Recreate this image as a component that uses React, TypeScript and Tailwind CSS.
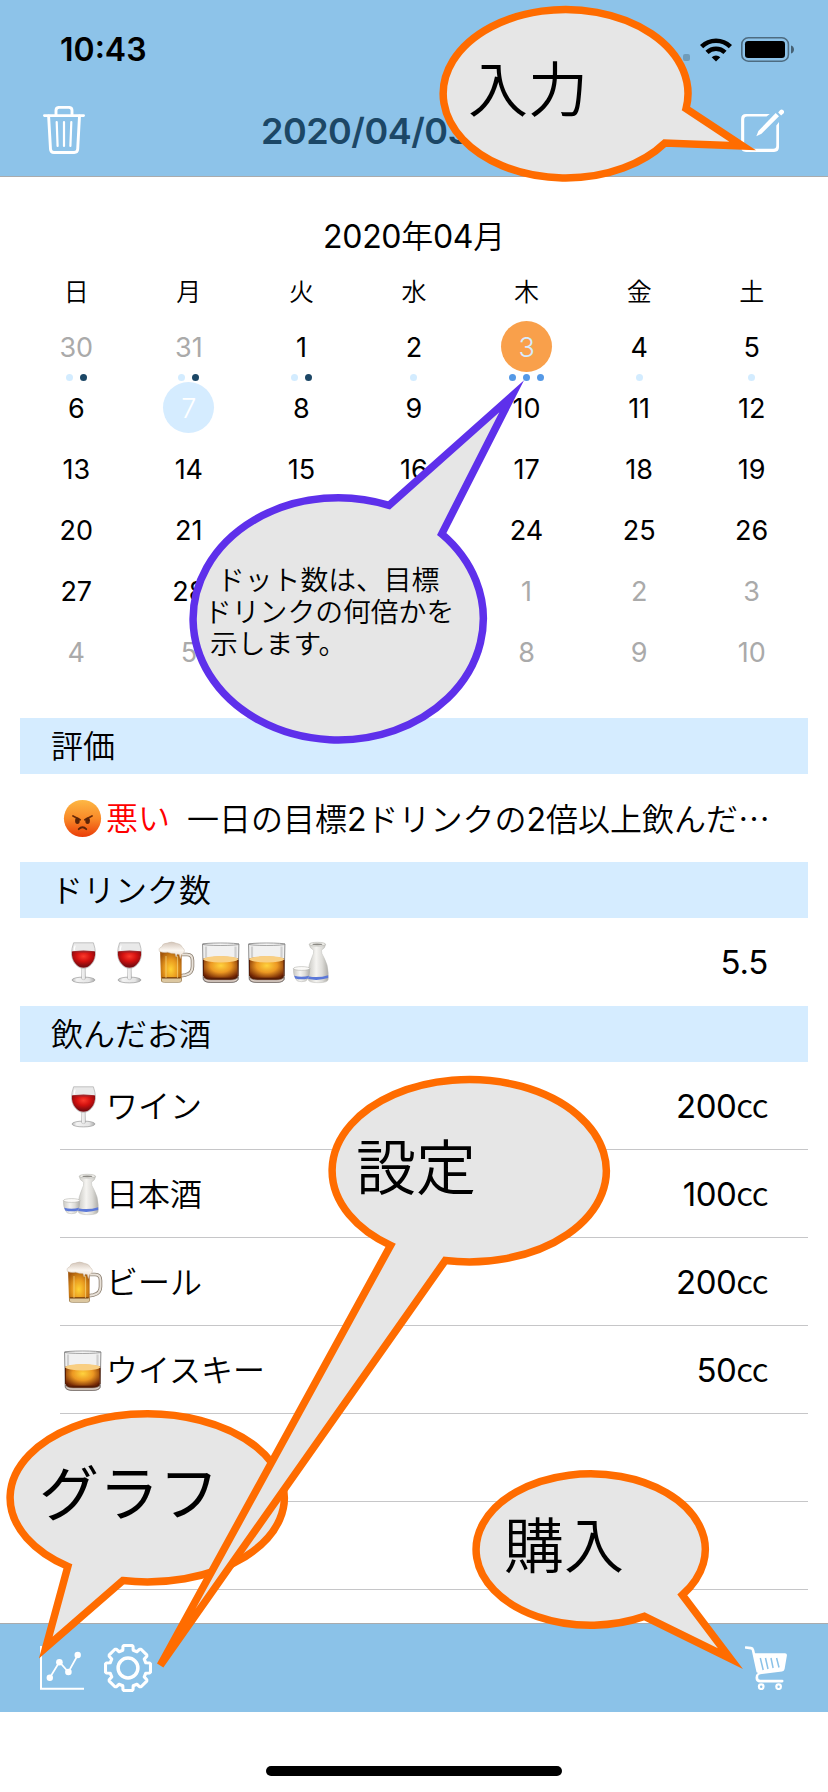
import React from "react";

/* ---------- status bar ---------- */

const WifiIcon = () => (
  <svg className="h-6 w-8" viewBox="0 0 32 24" fill="none">
    <path d="M1.6 8.6a20.6 20.6 0 0 1 28.8 0" stroke="#000" strokeWidth="4.6" />
    <path d="M7 14.4a12.8 12.8 0 0 1 18 0" stroke="#000" strokeWidth="4.4" />
    <path d="M16 23.6l-4.3-4.4a6.3 6.3 0 0 1 8.6 0z" fill="#000" />
  </svg>
);

const BatteryIcon = () => (
  <svg className="h-[25px] w-[54px]" viewBox="0 0 54 25" fill="none">
    <rect x="0.8" y="0.8" width="46.6" height="23.4" rx="6.5" stroke="#000" strokeOpacity="0.45" strokeWidth="1.6" />
    <rect x="4" y="4" width="40" height="17" rx="3.2" fill="#000" />
    <path d="M50 8.5c4 1 4 7 0 8z" fill="#000" fillOpacity="0.5" />
  </svg>
);

/* ---------- toolbar icons ---------- */

const TrashIcon = () => (
  <svg className="h-12 w-[42px]" viewBox="0 0 42 48" fill="none" stroke="#fff" strokeLinecap="round" strokeLinejoin="round">
    <path d="M1.4 9.6H40.6" strokeWidth="2.8" />
    <path d="M13 9V4.6q0-3.2 3.2-3.2h9.6q3.2 0 3.2 3.2V9" strokeWidth="2.9" />
    <path d="M5.6 10l1.9 33.2q.2 3.3 3.5 3.3h20.2q3.3 0 3.5-3.3L36.500 10" strokeWidth="2.9" />
    <path d="M13.7 16l.9 24M21 16v24M28.3 16l-.9 24" strokeWidth="2.2" />
  </svg>
);

const ComposeIcon = () => (
  <svg className="h-[43px] w-[43px]" viewBox="0 0 43 43" fill="none">
    <path d="M28.8 5L25.5 7.6H6.2q-3 0-3 3v26.2q0 3 3 3h26.100q3 0 3-3V16.500l2.700-3.500v25q0 4.900-4.900 4.900H5q-4.900 0-4.900-4.900V10Q.1 5 5 5z" fill="#fff" />
    <path d="M15.300 27.200l2.100-5.200L34.700 4l3.300 3.300L20.500 24.800z" fill="#fff" />
    <path d="M37.200 3.500l1.800-2.200a2.300 2.300 0 0 1 3.400 3.100l-2.300 2z" fill="#fff" />
  </svg>
);

const ChartIcon = () => (
  <svg className="h-11 w-11" viewBox="0 0 44 44" fill="none">
    <path d="M1 0V42.800H44" stroke="#fff" strokeWidth="2" />
    <path d="M9.800 31.800L19.400 16l9 10L37.800 9" stroke="#fff" strokeWidth="1.700" />
    <g fill="#fff">
      <circle cx="9.800" cy="31.800" r="3.200" />
      <circle cx="19.400" cy="16.300" r="3.300" />
      <circle cx="28.400" cy="26" r="3.300" />
      <circle cx="37.700" cy="9" r="3.200" />
    </g>
  </svg>
);

const gearOutline = (() => {
  const points: string[] = [];
  for (let k = 0; k < 8; k++) {
    const a = (k * Math.PI) / 4;
    const corners = [
      [17.8, -5.2],
      [21.6, -5],
      [22.5, -4],
      [22.5, 4],
      [21.6, 5],
      [17.8, 5.2],
    ];
    for (const [r, t] of corners) {
      const x = 24 + r * Math.cos(a) - t * Math.sin(a);
      const y = 24 + r * Math.sin(a) + t * Math.cos(a);
      points.push(`${x.toFixed(2)},${y.toFixed(2)}`);
    }
  }
  return points.join(" ");
})();

const GearIcon = () => (
  <svg className="h-12 w-12" viewBox="0 0 48 48" fill="none" stroke="#fff" strokeLinejoin="round">
    <polygon points={gearOutline} strokeWidth="3.1" />
    <circle cx="24" cy="24" r="9.9" strokeWidth="3.5" />
  </svg>
);

const CartIcon = () => (
  <svg className="h-11 w-[42px]" viewBox="0 0 42 44" fill="none">
    <path d="M.8 1.500L6 2.100q1.500.2 2 1.900l4.700 21.500" stroke="#fff" strokeWidth="2.600" strokeLinecap="round" />
    <path d="M9 7.300H40q2.200 0 1.900 2.300L39.600 23q-.4 2.300-2.600 2.600L17 27.900q-3.800.5-3.800 2.300V32q0 1.800 2 1.800h22q1.300 0 1.300 1.300t-1.300 1.300H15.200q-4.700 0-4.700-4.700 0-3.300 2.600-5z" fill="#fff" />
    <path d="M15.300 12l2.900 12M20.500 12l2.500 11M26 12l2.100 10M31.600 12l2.400 9.500" stroke="#8bc2e8" strokeWidth="1.500" />
    <circle cx="16.200" cy="40.700" r="2.300" stroke="#fff" strokeWidth="2.200" />
    <circle cx="33.600" cy="40.700" r="2.300" stroke="#fff" strokeWidth="2.200" />
  </svg>
);

/* ---------- emoji ---------- */

const EmojiDefs = () => (
  <svg className="absolute h-0 w-0" aria-hidden="true">
    <defs>
      <linearGradient id="face" x1="0" y1="0" x2="0" y2="1">
        <stop offset="0" stopColor="#fdb845" />
        <stop offset="0.5" stopColor="#f98a28" />
        <stop offset="1" stopColor="#ea3c08" />
      </linearGradient>
      <radialGradient id="wine" cx="0.5" cy="0.3" r="0.6">
        <stop offset="0" stopColor="#fb3a2c" />
        <stop offset="0.5" stopColor="#d3110f" />
        <stop offset="1" stopColor="#7c0b10" />
      </radialGradient>
      <linearGradient id="glass" x1="0" y1="0" x2="1" y2="0">
        <stop offset="0" stopColor="#b9b9b9" />
        <stop offset="0.2" stopColor="#f3f3f3" />
        <stop offset="0.75" stopColor="#e4e4e4" />
        <stop offset="1" stopColor="#a9a9a9" />
      </linearGradient>
      <radialGradient id="beer" cx="0.5" cy="0.62" r="0.6">
        <stop offset="0" stopColor="#ffd234" />
        <stop offset="0.5" stopColor="#e99a1e" />
        <stop offset="1" stopColor="#a3560a" />
      </radialGradient>
      <linearGradient id="foam" x1="0" y1="0" x2="0" y2="1">
        <stop offset="0" stopColor="#d3c5b9" />
        <stop offset="0.5" stopColor="#fbf6f0" />
        <stop offset="1" stopColor="#eadccc" />
      </linearGradient>
      <radialGradient id="whisky" cx="0.5" cy="0.4" r="0.6">
        <stop offset="0" stopColor="#ffd33e" />
        <stop offset="0.5" stopColor="#ec9822" />
        <stop offset="1" stopColor="#742805" />
      </radialGradient>
      <linearGradient id="china" x1="0" y1="0" x2="1" y2="0">
        <stop offset="0" stopColor="#c9c8c3" />
        <stop offset="0.4" stopColor="#f5f4f1" />
        <stop offset="0.7" stopColor="#dddcd8" />
        <stop offset="1" stopColor="#aeada8" />
      </linearGradient>
    </defs>
  </svg>
);

const emojiBox = "h-12 w-[46px] shrink-0";

const AngryFace = () => (
  <svg className={emojiBox} viewBox="0 0 46 48" fill="none">
    <circle cx="22.500" cy="24.500" r="18.600" fill="url(#face)" />
    <path d="M13 22l7.200 3.700M32 22l-7.200 3.700" stroke="#6b2a08" strokeWidth="1.800" strokeLinecap="round" />
    <ellipse cx="17.400" cy="26.800" rx="2.300" ry="3.200" fill="#5c2408" />
    <ellipse cx="27.600" cy="26.800" rx="2.300" ry="3.200" fill="#5c2408" />
    <path d="M18.700 35.200q3.800-3.900 7.600 0" stroke="#5c2408" strokeWidth="1.800" strokeLinecap="round" />
  </svg>
);

const Wine = () => (
  <svg className={emojiBox} viewBox="0 0 46 48" fill="none">
    <ellipse cx="23.500" cy="42" rx="11.500" ry="2.900" fill="url(#glass)" stroke="#999" strokeWidth="0.700" />
    <path d="M21.800 29h3.400l.3 11q0 1.700-2 1.700t-2-1.700z" fill="url(#glass)" stroke="#aaa" strokeWidth="0.400" />
    <path d="M13.600 4.800h19.800q2 5.500 2 11c0 8-6 14.600-11.900 14.600S11.600 23.800 11.600 15.800q0-5.500 2-11z" fill="#e9e9e9" stroke="#b4b4b4" strokeWidth="0.800" />
    <path d="M11.900 13.400h23.200c.7 9.800-5.700 16.400-11.600 16.400S11.200 23.200 11.900 13.400z" fill="url(#wine)" />
    <ellipse cx="23.500" cy="13.600" rx="11.400" ry="1" fill="#a3272a" />
    <path d="M15.200 7.500q-1 3-1 5" stroke="#fff" strokeWidth="1.200" />
  </svg>
);

const Beer = () => (
  <svg className={emojiBox} viewBox="0 0 46 48" fill="none">
    <path d="M29 16.500h6q5.500 0 5.500 6v6q0 7-7 8.500l-4.500.8" stroke="#8f8375" strokeWidth="3.600" />
    <path d="M29 16.500h6q5.500 0 5.500 6v6q0 7-7 8.500l-4.500.8" stroke="#e8e1d8" strokeWidth="1.900" />
    <path d="M8 11h21.600v31q0 2-3 2H12q-3 0-3-2z" fill="url(#beer)" />
    <path d="M9.500 40h20v2.800q0 1.700-3 1.700H12.500q-3 0-3-1.700z" fill="#dcc7a0" stroke="#8b744f" strokeWidth="0.500" />
    <path d="M10 39.800h18.500" stroke="#7a3d06" strokeWidth="1.200" />
    <path d="M14 18v22M25.500 18v22" stroke="#fff0a0" strokeOpacity="0.500" strokeWidth="1.100" />
    <path d="M7.500 13.500Q6 10 9.500 9q1-4 6-4 4-2 8.500.2 5 .5 6.500 4.300 3.500 3 .6 6l-1.700 1.300-1 3.700-1.200-4-2-.5-1 3-1.200-3.500q-4 0-7.500-1.300-4 .8-8-.7z" fill="url(#foam)" stroke="#c9baaa" strokeWidth="0.500" />
  </svg>
);

const Whisky = () => (
  <svg className={emojiBox} viewBox="0 0 46 48" fill="none">
    <path d="M4.600 6h36.300l-.7 35q-.2 3-7 3.300H12q-6.600-.2-6.800-3.300z" fill="#f1f1f1" stroke="#8d8d8d" strokeWidth="1" />
    <path d="M8 8.500v12M37.500 8.500v12" stroke="#cfcfcf" strokeWidth="2.200" />
    <path d="M5.400 20.500q17.400-4 34.800 0l-.5 17.300q-.3 3.500-6.500 3.500H12.500q-6.300 0-6.600-3.500z" fill="url(#whisky)" />
    <ellipse cx="22.800" cy="21.300" rx="17.300" ry="3.200" fill="#f9cf82" />
    <path d="M5.800 39q1 2.800 7 2.800h20q6 0 7-2.800v2.500q-1 2.800-7 2.800h-20q-6 0-7-2.800z" fill="#ddd0c7" stroke="#5b4b45" strokeWidth="0.600" />
    <path d="M6.200 37.500q1 3.200 7 3.200h19q6 0 7-3.200" stroke="#571d05" strokeWidth="1.900" />
    <path d="M5.500 22v16M40 22v16" stroke="#571d05" strokeWidth="1" />
    <ellipse cx="22.800" cy="6.200" rx="18.100" ry="1.200" fill="#fff" stroke="#858585" strokeWidth="0.800" />
  </svg>
);

const Sake = () => (
  <svg className={emojiBox} viewBox="0 0 46 48" fill="none">
    <path d="M19.200 6.200h16.400q-.2 3.800-4.200 6-.3 3 2.600 7.500 4 7 4.200 15.300v6.300q0 3.400-10 3.400t-10-3.400V35q.2-8.300 3.600-15.300 2.300-4.500 1.900-7.500-4.300-2.200-4.500-6z" fill="url(#china)" stroke="#bdbcb8" strokeWidth="0.500" />
    <ellipse cx="27.400" cy="6.200" rx="8.100" ry="1.900" fill="#f0efeb" stroke="#a9a8a3" strokeWidth="0.500" />
    <ellipse cx="27.400" cy="6.300" rx="5" ry="0.900" fill="#8c8a85" />
    <path d="M18.200 38.200q10 2.200 20-1v2.900q-10 3-20 1z" fill="#5b78d8" />
    <path d="M3.400 30.500h16.400q.3 6.500-2.600 11-1 2.200-5.600 2.200t-5.600-2.200q-2.900-4.500-2.600-11z" fill="url(#china)" stroke="#b5b4b0" strokeWidth="0.500" />
    <path d="M4.200 37.700q7.400 2 14.800 0l-1 2.700q-6.400 1.700-12.800 0z" fill="#5b78d8" />
    <ellipse cx="11.600" cy="30.500" rx="8.200" ry="1.900" fill="#fbfaf8" stroke="#a9a8a3" strokeWidth="0.500" />
  </svg>
);

/* ---------- calendar ---------- */

type Dot = "light" | "dark" | "blue";
type Day = { n: number; muted?: boolean; mark?: "selected" | "today"; dots?: Dot[] };

const weekdays = ["日", "月", "火", "水", "木", "金", "土"];

const firstWeek: Day[] = [
  { n: 30, muted: true, dots: ["light", "dark"] },
  { n: 31, muted: true, dots: ["light", "dark"] },
  { n: 1, dots: ["light", "dark"] },
  { n: 2, dots: ["light"] },
  { n: 3, mark: "selected", dots: ["blue", "blue", "blue"] },
  { n: 4, dots: ["light"] },
  { n: 5, dots: ["light"] },
];

const days: Day[] = [
  ...firstWeek,
  ...Array.from({ length: 25 }, (_, i): Day => ({ n: i + 6, mark: i === 1 ? "today" : undefined })),
  ...Array.from({ length: 10 }, (_, i): Day => ({ n: i + 1, muted: true })),
];

const dotColor: Record<Dot, string> = {
  light: "bg-[#d3ecff]",
  dark: "bg-[#1c4766]",
  blue: "bg-[#5599e6]",
};

const DayCell = ({ day }: { day: Day }) => {
  const tone =
    day.mark === "selected"
      ? "bg-[#f9a04b] text-[#d6ecff] font-light"
      : day.mark === "today"
        ? "bg-[#d5ecff] text-white font-light"
        : day.muted
          ? "text-[#aaaaaa]"
          : "text-black";
  return (
    <div className="flex h-[61px] flex-col items-center">
      <div className={`flex size-[51px] items-center justify-center rounded-full pt-0.5 text-[27px] leading-none ${tone}`}>{day.n}</div>
      <div className="mt-0.5 flex gap-[7px]">
        {day.dots?.map((d, i) => <span key={i} className={`size-[7px] rounded-full ${dotColor[d]}`} />)}
      </div>
    </div>
  );
};

/* ---------- list ---------- */

const SectionTitle = ({ children }: { children: React.ReactNode }) => (
  <h2 className="flex h-14 items-center bg-[#d5ecff] pt-0.5 pl-[31px] text-[32px] leading-none font-[350]">{children}</h2>
);

const drinks = [
  { icon: Wine, name: "ワイン", amount: 200 },
  { icon: Sake, name: "日本酒", amount: 100 },
  { icon: Beer, name: "ビール", amount: 200 },
  { icon: Whisky, name: "ウイスキー", amount: 50 },
];

const drinkIcons = [Wine, Wine, Beer, Whisky, Whisky, Sake];

/* ---------- callouts ---------- */

type Point = [number, number];
type BubbleProps = { color: string; center: Point; radius: Point; from: Point; to: Point; tip: Point };

/* An ellipse with a pointed tail; `from` and `to` are pulled onto the ellipse, clockwise from `from`. */
const Bubble = ({ color, center: [cx, cy], radius: [rx, ry], from, to, tip }: BubbleProps) => {
  const snap = ([x, y]: Point) => {
    const u = (x - cx) / rx;
    const v = (y - cy) / ry;
    const n = Math.hypot(u, v);
    return `${(cx + (u / n) * rx).toFixed(2)} ${(cy + (v / n) * ry).toFixed(2)}`;
  };
  return (
    <path
      d={`M${snap(from)}A${rx} ${ry} 0 1 1 ${snap(to)}L${tip[0]} ${tip[1]}Z`}
      fill="#e6e6e6"
      stroke={color}
      strokeWidth="7.500"
      strokeMiterlimit="10"
    />
  );
};

const Callouts = () => (
  <svg className="pointer-events-none absolute top-0 left-0 h-[1792px] w-[828px] font-['Noto_Sans_CJK_JP',sans-serif]" viewBox="0 0 828 1792">
    <Bubble color="#ff6c00" center={[565.6, 93.7]} radius={[122.4, 84.2]} from={[665, 143]} to={[686.7, 108.7]} tip={[742.7, 146]} />
    <Bubble color="#5e30eb" center={[338.2, 618.8]} radius={[145.1, 121.1]} from={[442, 533.7]} to={[389.3, 505]} tip={[511.7, 396.3]} />
    <Bubble color="#ff6c00" center={[147.2, 1497.8]} radius={[137.1, 84.1]} from={[68.3, 1566]} to={[122.7, 1580.7]} tip={[45.8, 1647.5]} />
    <text x="39" y="1516" fontSize="60" fill="#000">グラフ</text>
    <Bubble color="#ff6c00" center={[469.2, 1170.7]} radius={[137.1, 91.2]} from={[390.7, 1245.3]} to={[445.3, 1260.3]} tip={[160.3, 1665.3]} />
    <Bubble color="#ff6c00" center={[590.7, 1549.5]} radius={[114.6, 75.7]} from={[644.3, 1616.3]} to={[682, 1594.7]} tip={[730.5, 1658.7]} />
    <g fontSize="60" fill="#000" fontWeight="350">
      <text x="468" y="112">入力</text>
      <text x="356" y="1190">設定</text>
      <text x="504" y="1568">購入</text>
    </g>
    <g fontSize="27.800" fill="#000" fontWeight="350">
      <text x="217" y="590">ドット数は、目標</text>
      <text x="204" y="621.500">ドリンクの何倍かを</text>
      <text x="210" y="654">示します。</text>
    </g>
  </svg>
);

export default function App() {
  return (
    <div lang="ja" className="relative flex h-[1792px] w-[828px] flex-col overflow-hidden bg-white font-['Inter','Noto_Sans_CJK_JP',sans-serif] text-black">
      <EmojiDefs />
      <header className="border-b border-[#a9abad] bg-[#8dc3e9] pb-[15px]">
        <div className="flex h-[99px] items-center justify-between pr-[33px] pl-[60px]">
          <span className="pt-px text-[32px] leading-none font-semibold">10:43</span>
          <div className="flex items-center">
            <span className="mt-4 mr-[10px] size-[7px] rounded-xs bg-[#6f9cba]" />
            <WifiIcon />
            <span className="w-[9px]" />
            <BatteryIcon />
          </div>
        </div>
        <div className="flex h-[62px] items-center pr-[44px] pl-[43px]">
          <TrashIcon />
          <h1 className="ml-[176px] pt-0.5 text-[36px] leading-none font-semibold tracking-[-0.5px] text-[#1c4766]">2020/04/03</h1>
          <div className="ml-auto">
            <ComposeIcon />
          </div>
        </div>
      </header>

      <main className="flex flex-1 flex-col px-5">
        <section className="h-[541px] pt-[31px]">
          <div className="flex h-14 items-center justify-center pt-0.5 text-[32px] leading-none tracking-[-0.3px]">
            <span>
              2020<span className="font-[350]">年</span>04<span className="font-[350]">月</span>
            </span>
          </div>
          <div className="grid h-[57px] grid-cols-7 items-center text-center text-[25px] leading-none font-[350]">
            {weekdays.map((w) => (
              <div key={w}>{w}</div>
            ))}
          </div>
          <div className="grid grid-cols-7">
            {days.map((day, i) => (
              <DayCell key={i} day={day} />
            ))}
          </div>
        </section>

        <SectionTitle>評価</SectionTitle>
        <div className="flex h-[88px] items-center pl-10 text-[32px] leading-none whitespace-nowrap">
          <AngryFace />
          <span className="mr-[17px] pt-0.5 font-[350] text-[#ff0000]">悪い</span>
          <span>
            <span className="font-[350]">一日の目標</span>2<span className="font-[350]">ドリンクの</span>2
            <span className="font-['Noto_Sans_CJK_JP',sans-serif] font-[350]">倍以上飲んだ…</span>
          </span>
        </div>

        <SectionTitle>ドリンク数</SectionTitle>
        <div className="flex h-[88px] items-center pr-10 pl-10 text-[33px] leading-none">
          {drinkIcons.map((Icon, i) => (
            <Icon key={i} />
          ))}
          <span className="ml-auto tracking-[-0.3px]">5.5</span>
        </div>

        <SectionTitle>飲んだお酒</SectionTitle>
        <ul className="ml-10">
          {drinks.map(({ icon: Icon, name, amount }) => (
            <li key={name} className="flex h-[88px] items-center border-b border-[#c6c6c8] pr-10 text-[32px] leading-none">
              <Icon />
              <span className="pt-0.5 font-[350]">{name}</span>
              <span className="ml-auto text-[33px] tracking-[-0.5px]">
                {amount}
                <span className="font-['Noto_Sans_CJK_JP',sans-serif] font-[350]">cc</span>
              </span>
            </li>
          ))}
          <li className="h-[88px] border-b border-[#c6c6c8]" />
          <li className="h-[88px] border-b border-[#c6c6c8]" />
        </ul>
      </main>

      <nav className="flex h-[89px] items-center border-t border-[#a9abad] bg-[#8bc2e8] pr-[41px] pb-px pl-10">
        <ChartIcon />
        <span className="w-5" />
        <GearIcon />
        <span className="ml-auto">
          <CartIcon />
        </span>
      </nav>
      <footer className="flex h-20 items-end justify-center pb-4">
        <span className="h-[10px] w-[296px] rounded-full bg-black" />
      </footer>

      <Callouts />
    </div>
  );
}
